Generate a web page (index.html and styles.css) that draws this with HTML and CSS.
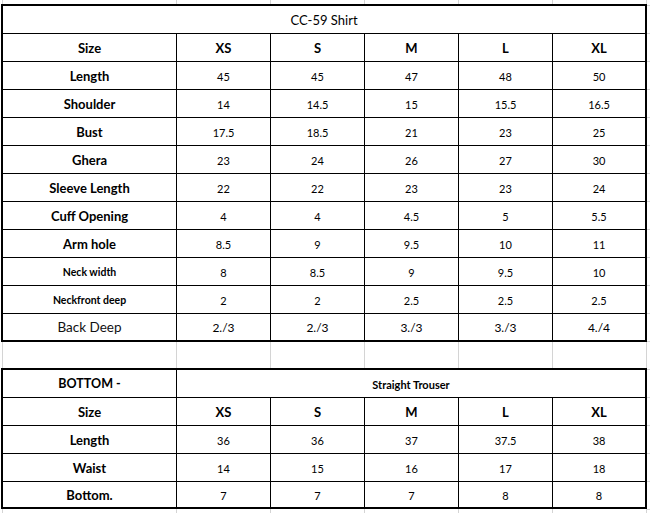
FILE: index.html
```html
<!DOCTYPE html>
<html>
<head>
<meta charset="utf-8">
<title>CC-59 Size Chart</title>
<link rel="stylesheet" href="styles.css">
</head>
<body>
<div class="sheet">
  <table class="chart shirt">
    <colgroup>
      <col class="c-label"><col class="c-size"><col class="c-size"><col class="c-size"><col class="c-size"><col class="c-last">
    </colgroup>
    <tr class="title-row"><td colspan="6" class="title">CC-59 Shirt</td></tr>
    <tr class="head"><th>Size</th><th>XS</th><th>S</th><th>M</th><th>L</th><th>XL</th></tr>
    <tr><th>Length</th><td>45</td><td>45</td><td>47</td><td>48</td><td>50</td></tr>
    <tr><th>Shoulder</th><td>14</td><td>14.5</td><td>15</td><td>15.5</td><td>16.5</td></tr>
    <tr><th>Bust</th><td>17.5</td><td>18.5</td><td>21</td><td>23</td><td>25</td></tr>
    <tr><th>Ghera</th><td>23</td><td>24</td><td>26</td><td>27</td><td>30</td></tr>
    <tr><th>Sleeve Length</th><td>22</td><td>22</td><td>23</td><td>23</td><td>24</td></tr>
    <tr><th>Cuff Opening</th><td>4</td><td>4</td><td>4.5</td><td>5</td><td>5.5</td></tr>
    <tr><th>Arm hole</th><td>8.5</td><td>9</td><td>9.5</td><td>10</td><td>11</td></tr>
    <tr><th class="small">Neck width</th><td>8</td><td>8.5</td><td>9</td><td>9.5</td><td>10</td></tr>
    <tr><th class="small">Neckfront deep</th><td>2</td><td>2</td><td>2.5</td><td>2.5</td><td>2.5</td></tr>
    <tr class="last back"><th class="plain">Back Deep</th><td>2./3</td><td>2./3</td><td>3./3</td><td>3./3</td><td>4./4</td></tr>
  </table>

  <table class="chart trouser">
    <colgroup>
      <col class="c-label"><col class="c-size"><col class="c-size"><col class="c-size"><col class="c-size"><col class="c-last">
    </colgroup>
    <tr class="title-row"><th class="section">BOTTOM -</th><td colspan="5" class="subtitle">Straight Trouser</td></tr>
    <tr class="head"><th>Size</th><th>XS</th><th>S</th><th>M</th><th>L</th><th>XL</th></tr>
    <tr><th>Length</th><td>36</td><td>36</td><td>37</td><td>37.5</td><td>38</td></tr>
    <tr><th>Waist</th><td>14</td><td>15</td><td>16</td><td>17</td><td>18</td></tr>
    <tr class="last"><th>Bottom.</th><td>7</td><td>7</td><td>7</td><td>8</td><td>8</td></tr>
  </table>
</div>
</body>
</html>
```

FILE: styles.css
```css
html, body {
  margin: 0;
  padding: 0;
  background: #fff;
}

.sheet {
  width: 650px;
  height: 513px;
  box-sizing: border-box;
  padding: 4px 0 0 1px;
  font-family: Lato, "Liberation Sans", sans-serif;
  color: #000;
  background-color: #fff;
  background-image:
    linear-gradient(to bottom, #d4d4d4 0 1px, transparent 1px 28px),
    linear-gradient(to right,
      transparent 0 2px, #d4d4d4 2px 3px,
      transparent 3px 176px, #d4d4d4 176px 177px,
      transparent 177px 270px, #d4d4d4 270px 271px,
      transparent 271px 364px, #d4d4d4 364px 365px,
      transparent 365px 458px, #d4d4d4 458px 459px,
      transparent 459px 552px, #d4d4d4 552px 553px,
      transparent 553px 646px, #d4d4d4 646px 647px,
      transparent 647px 650px);
  background-size: 3px 28px, 650px 513px;
  background-position: 647px 5px, 0 0;
  background-repeat: repeat-y, no-repeat;
}

.chart {
  border-collapse: separate;
  border-spacing: 0;
  border: 2px solid #000;
  background: #fff;
  table-layout: fixed;
  width: 646px;
}

.trouser {
  margin-top: 26px;
}

.c-label { width: 174px; }
.c-size { width: 94px; }
.c-last { width: 92px; }

.chart td,
.chart th {
  box-sizing: border-box;
  height: 28px;
  padding: 1px 0 0;
  border-right: 1px solid #000;
  border-bottom: 1px solid #000;
  text-align: center;
  vertical-align: middle;
  white-space: nowrap;
  line-height: 1;
}

.chart tr > :last-child {
  border-right: none;
}

.chart tr.last > * {
  border-bottom: none;
  height: 26px;
}

.trouser tr.last > * {
  height: 25px;
}

.chart th {
  font-weight: 700;
  font-size: 13px;
}

.chart td {
  font-weight: 400;
  font-size: 11px;
}

.chart .title {
  font-size: 13px;
  font-weight: 400;
}

.chart th.small {
  font-size: 10.5px;
}

.chart th.plain {
  font-size: 13.5px;
  font-weight: 400;
  color: #111;
}

.back td {
  font-size: 12px;
}

.chart th.section {
  font-size: 12.5px;
}

.chart .subtitle {
  font-size: 11px;
  font-weight: 700;
}
```
